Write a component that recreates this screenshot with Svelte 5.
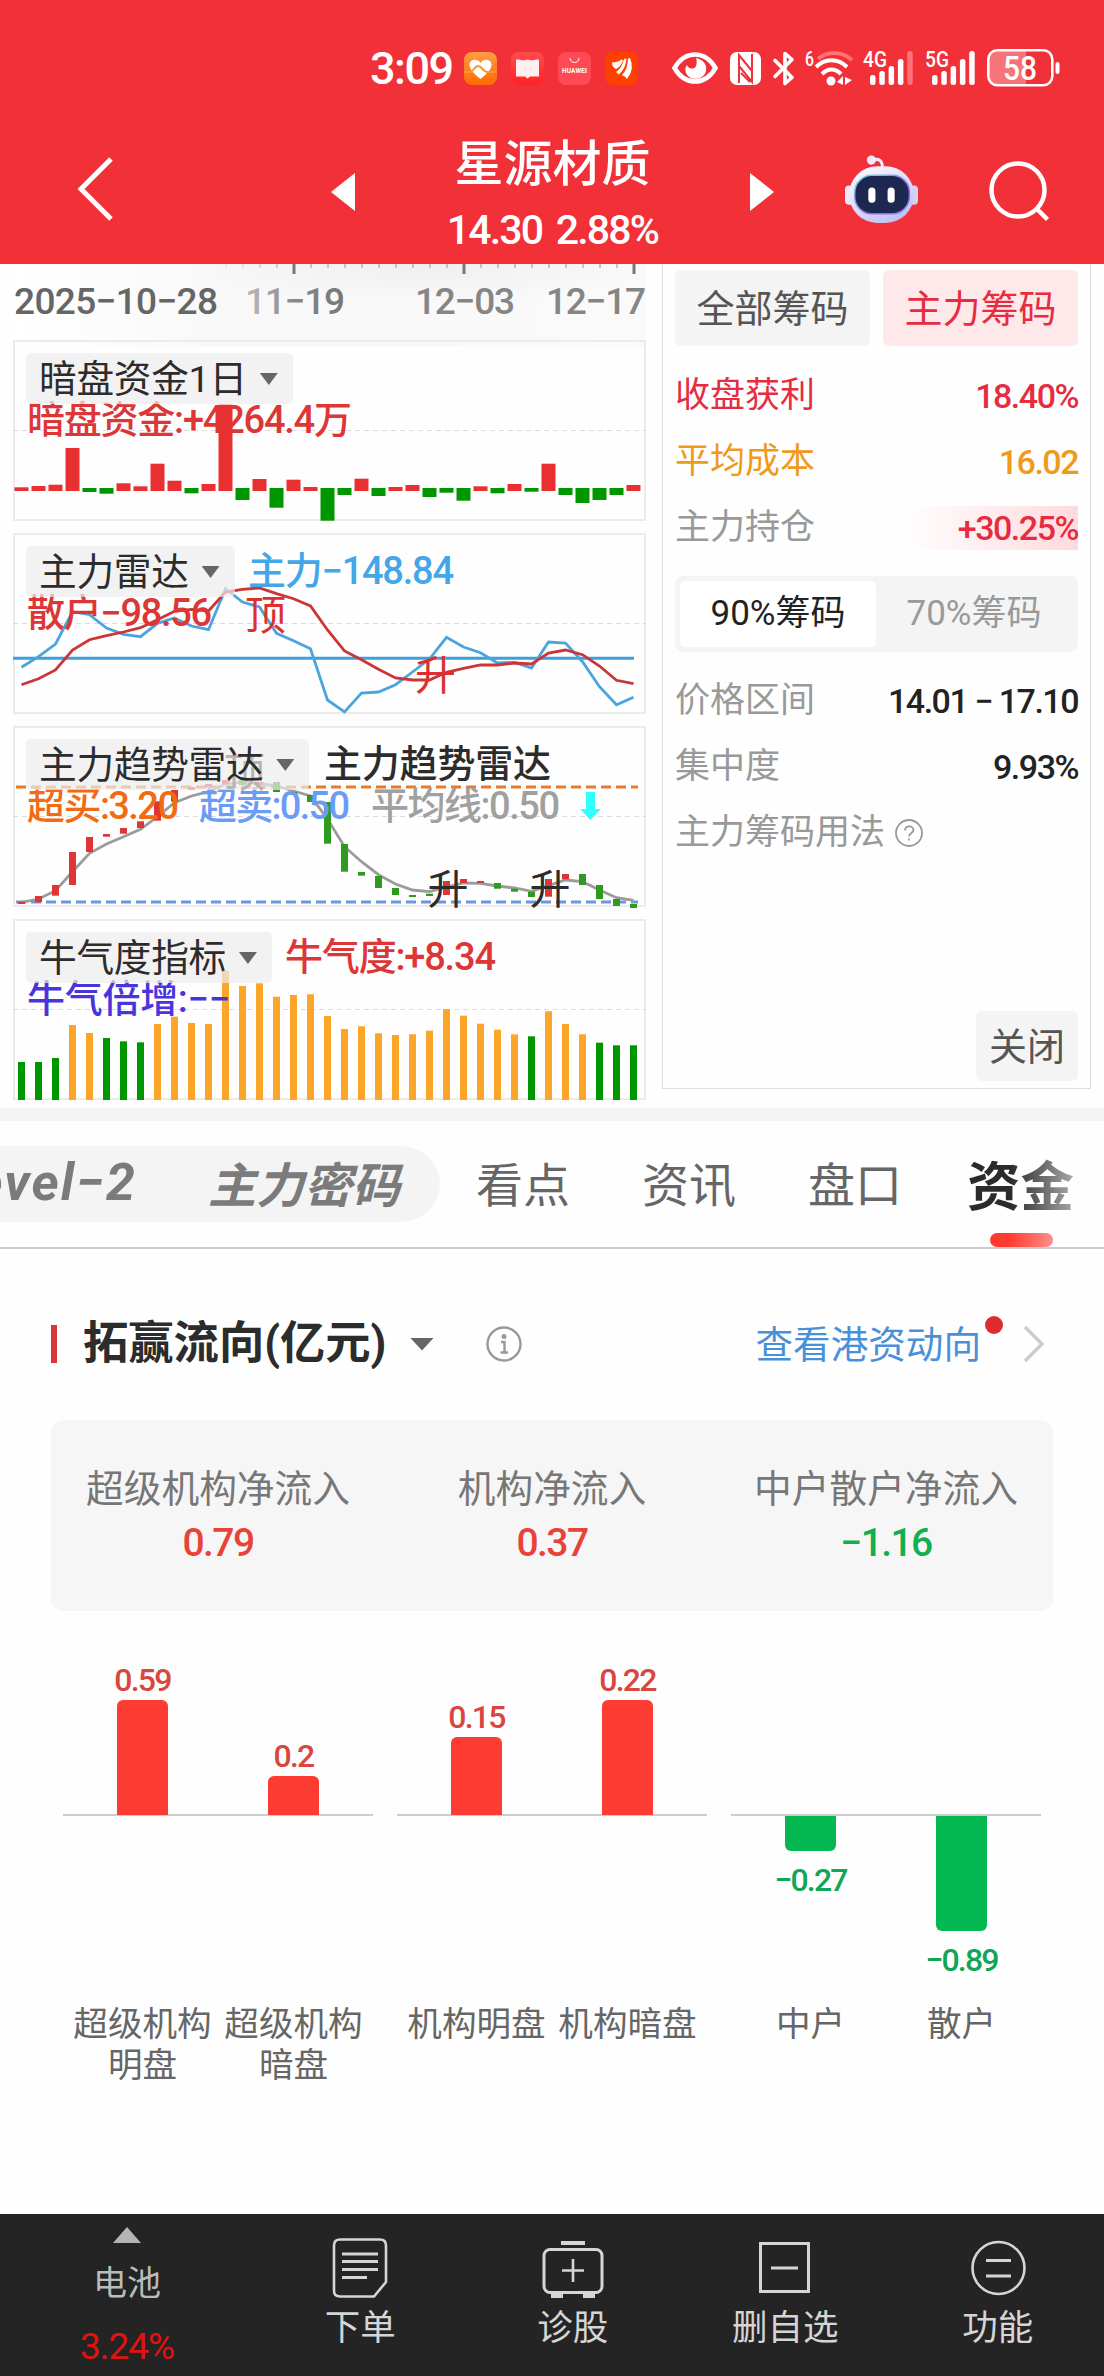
<script>
    const UP = "#e93030";
    const DOWN = "#009600";
    const STEP = 17;
    const FIRST = 8.5;

    const x = (i) => FIRST + i * STEP;
    const line = (values) => values.map((v, i) => `${x(i)},${v}`).join(" ");

    const axisTicks = Array.from({ length: 25 }, (_, i) => 213 + i * STEP);
    const axisDates = [
        { text: "2025-10-28", x: 1, width: 204, fill: "#666" },
        { text: "11-19", x: 232, width: 100, fill: "url(#dateFade)" },
        { text: "12-03", x: 402, width: 100, fill: "#858585" },
        { text: "12-17", x: 533, width: 100, fill: "#858585" },
    ];

    // signed height of every daily bar
    const darkFlow = [
        3.7, 5, 6.3, 43, -4, -5.7, 7.7, 4.7, 27.3, 10.3, -5.3, 7, 86.3, -12, 12, -19.7, 11.3, 4, -32.7,
        -7, 12.3, -8, 4, 6, -9, -4.7, -12.7, 4.7, -5.3, 7, -3.7, 27.3, -7, -15, -12, -7, 6,
    ];

    const mainForce = [
        134.3, 123.7, 111, 78.7, 81.7, 95, 101.3, 103.7, 90.3, 85, 93, 96.7, 55.7, 69, 74, 100.3, 107.7,
        115.7, 167, 179, 160, 159, 151.7, 139, 126, 104.3, 114, 119.7, 130, 129.3, 135, 109, 110, 128.7,
        153.7, 171.7, 164.3,
    ];
    const retail = [
        151.7, 145.7, 137, 117, 106.7, 102.7, 99, 94.7, 86.7, 78.3, 76.3, 78, 59, 56.3, 55, 60.7, 65.7,
        73, 97, 118, 126.7, 136.3, 145, 147, 147, 139.3, 135.3, 132, 132, 130, 131, 120, 117, 121.7, 133,
        147.3, 150.7,
    ];

    const trend = [
        176.3, 173, 164.7, 145.7, 127.3, 118, 110.7, 103.3, 90.7, 76.7, 70, 65.7, 58, 56, 57.5, 60, 65,
        70, 93, 120.7, 135.7, 148.7, 158, 164, 165.7, 161, 157, 157.3, 160, 162, 165.3, 159.7, 154,
        155.7, 164, 171.7, 174.3,
    ];
    // [top, bottom, rising]
    const candles = [
        [175.7, 178, 1], [170, 176.3, 1], [159, 169.7, 1], [126, 159, 1], [111, 126, 1], [108, 110.7, 1],
        [102, 107.7, 1], [95.3, 102, 1], [75.3, 94.7, 1], [64, 75.7, 1], [61, 64, 1], [58, 61, 1],
        [54, 58, 1], [54, 59, 0], [56, 59, 1], [56, 66, 0], [66, 69, 0], [69, 76, 0], [76, 117.7, 0],
        [118, 145.7, 0], [146, 149.7, 0], [150, 162, 0], [162, 169, 0], [169, 171, 0], [167.7, 170, 0],
        [155, 169, 1], [153, 157, 1], [155, 157, 1], [157, 162.7, 0], [162.7, 165.7, 0], [165.7, 171, 0],
        [153, 170.7, 1], [148, 153.3, 1], [148, 159, 0], [159, 173, 0], [173, 180, 0], [178, 182, 0],
    ];

    const bull = [
        143, 143, 139, 106, 114, 119, 122.3, 123.3, 105, 97.7, 104, 105, 51.7, 67, 64.3, 77.7, 76, 75.3,
        97, 110, 107.3, 114.3, 116, 115.3, 111.7, 90, 96.7, 104.7, 110.7, 115.3, 117.3, 92.3, 105, 115.3,
        123.7, 126.3, 126.3,
    ];
    const bullGreen = [0, 1, 2, 5, 6, 7, 30, 34, 35, 36];

    const summary = [
        { label: "超级机构净流入", value: "0.79" },
        { label: "机构净流入", value: "0.37" },
        { label: "中户散户净流入", value: "-1.16" },
    ];

    const groups = [
        [
            { label: "超级机构明盘", value: "0.59", height: 115 },
            { label: "超级机构暗盘", value: "0.2", height: 39 },
        ],
        [
            { label: "机构明盘", value: "0.15", height: 78 },
            { label: "机构暗盘", value: "0.22", height: 115 },
        ],
        [
            { label: "中户", value: "-0.27", height: 35 },
            { label: "散户", value: "-0.89", height: 115 },
        ],
    ];

    const isDown = (value) => value.startsWith("-");
    const dash = (value) => value.replaceAll("-", "−");
</script>

<div class="page">
    <header>
        <div class="status">
            <span class="clock">3:09</span>
            <svg class="app" viewBox="0 0 33 33">
                <defs>
                    <linearGradient id="health" x1="0" y1="0" x2="0" y2="1">
                        <stop offset="0" stop-color="#ff9d45" />
                        <stop offset="1" stop-color="#ff6a00" />
                    </linearGradient>
                </defs>
                <rect width="33" height="33" rx="8" fill="url(#health)" />
                <path d="M16.500 27C11 22 5.500 18 5.500 13c0-6 8-7 11-2 3-5 11-4 11 2 0 5-5.500 9-11 14z" fill="#fff" />
                <path d="M0 20h6c4 0 4-6 8-6s5 6 9 6h10" fill="none" stroke="#ff9331" stroke-width="2" />
            </svg>
            <svg class="app" viewBox="0 0 33 33">
                <defs>
                    <linearGradient id="book" x1="0" y1="0" x2="0" y2="1">
                        <stop offset="0" stop-color="#ff4c4f" />
                        <stop offset="1" stop-color="#ff2226" />
                    </linearGradient>
                </defs>
                <rect width="33" height="33" rx="8" fill="url(#book)" />
                <path d="M5 7.500h3c2 1 6 1 8.500 0 2.500 1 6.500 1 8.500 0h3v17h-9l-2.500 2-2.500-2H5z" fill="#fff0ee" />
            </svg>
            <svg class="app" viewBox="0 0 33 33">
                <rect width="33" height="33" rx="8" fill="#ff4a55" />
                <path d="M12 6c0 6 9 6 9 0" fill="none" stroke="#fff" stroke-width="1" />
                <text x="4" y="21" font-size="6.500" font-weight="700" fill="#fff" textLength="25">HUAWEI</text>
            </svg>
            <svg class="app" viewBox="0 0 33 33">
                <rect width="33" height="33" rx="8" fill="#ff4000" />
                <path d="M7 10.500q6 0 9.500-3l1.500 1q-2 6-7 8.500-4-2-4-6.500zM11 20q6-4 8-13l2.500-.5Q21 16 14 22.500zM17 23q6-6 6-16.500l2-.5q5 11-3 21-2-3-5-4z" fill="#fff" />
            </svg>

            <svg class="eye" viewBox="0 0 46 32">
                <path d="M2.500 16C13-2 33-2 43.500 16 33 34 13 34 2.500 16z" fill="none" stroke="#fff" stroke-width="4.500" />
                <path d="M24 6c9 2 11 8 10 13-2 9-16 11-20 2-1-3-1-6 1-8 1 4 7 5 9 1 1-3 1-5 0-8z" fill="#fff" />
            </svg>
            <svg class="nfc" viewBox="0 0 31 33">
                <rect width="31" height="33" rx="7" fill="#fff" />
                <path d="M9 31V3l13 16M22 2v28L9 14M11 21l9 9" fill="none" stroke="#f13038" stroke-width="2" />
            </svg>
            <svg class="bluetooth" viewBox="0 0 22 34">
                <path d="M2 9l17 17-7 6V2l7 6L2 25" fill="none" stroke="#fff" stroke-width="3.600" stroke-linecap="round" stroke-linejoin="round" />
            </svg>
            <svg class="wifi" viewBox="0 0 48 36">
                <text x="0" y="16" font-size="21" font-weight="500" fill="#fff" textLength="9" lengthAdjust="spacingAndGlyphs">6</text>
                <path d="M13 9c10-8 24-8 34 1" fill="none" stroke="#ff7276" stroke-width="4" />
                <path d="M11 17c9-9 22-9 31 0M17 24c6-6 13-6 19 0" fill="none" stroke="#fff" stroke-width="4" />
                <circle cx="26" cy="31" r="4.500" fill="#fff" />
                <path d="M32 32l6-6v9zM40 27l7 3-7 5z" fill="#fff" />
            </svg>
            {#each ["4G", "5G"] as net}
                <svg class="signal" viewBox="0 0 50 36">
                    <text x="0" y="17" font-size="22" font-weight="500" fill="#fff" textLength="24" lengthAdjust="spacingAndGlyphs">{net}</text>
                    {#each [10, 14, 19, 26, 34] as h, i}
                        <rect x={7 + i * 9.300} y={35 - h} width="5.500" height={h} rx="2.500" fill={net === "4G" && i === 4 ? "#ff7276" : "#fff"} />
                    {/each}
                </svg>
            {/each}
            <svg class="battery" viewBox="0 0 73 38">
                <path d="M10 2h29v34H10a8 8 0 0 1-8-8V10a8 8 0 0 1 8-8z" fill="#f7757a" />
                <rect x="1.300" y="1.300" width="64" height="35" rx="9" fill="none" stroke="#fff" stroke-width="2.600" />
                <rect x="68.500" y="13" width="4" height="12" rx="2" fill="#fff" />
                <text x="16" y="30.500" font-size="33" font-weight="500" fill="#fff" textLength="34" lengthAdjust="spacingAndGlyphs">58</text>
            </svg>
        </div>

        <div class="nav">
            <svg class="back" viewBox="0 0 36 64">
                <path d="M34 2L4 32l30 30" fill="none" stroke="#fff" stroke-width="5" />
            </svg>
            <svg class="prev" viewBox="0 0 24 38"><path d="M24 0v38L0 19z" fill="#fff" /></svg>
            <div class="stock">
                <h1>星源材质</h1>
                <p>14.30 2.88%</p>
            </div>
            <svg class="next" viewBox="0 0 24 38"><path d="M0 0v38l24-19z" fill="#fff" /></svg>
            <svg class="robot" viewBox="0 0 72 68">
                <defs>
                    <linearGradient id="shell" x1="0" y1="0" x2="0.600" y2="1">
                        <stop offset="0" stop-color="#fff" />
                        <stop offset="1" stop-color="#c3c3f2" />
                    </linearGradient>
                    <linearGradient id="rim" x1="0" y1="0" x2="1" y2="1">
                        <stop offset="0" stop-color="#7fe0ef" />
                        <stop offset="0.600" stop-color="#9a62e8" />
                        <stop offset="1" stop-color="#7c7cf0" />
                    </linearGradient>
                </defs>
                <path d="M27 5c6-2 10 0 10 8" fill="none" stroke="#f3e9fa" stroke-width="3" />
                <circle cx="26" cy="5" r="4.500" fill="#f3e9fa" />
                <rect x="0" y="30" width="10" height="19" rx="4" fill="#ece8fb" />
                <rect x="62" y="30" width="10" height="19" rx="4" fill="#d5d0f5" />
                <rect x="4" y="11" width="64" height="56" rx="28" fill="url(#shell)" />
                <rect x="9.500" y="20" width="54" height="38" rx="17" fill="#1d2850" stroke="url(#rim)" stroke-width="1.500" />
                <rect x="23" y="32" width="7" height="15" rx="3.500" fill="#fff" />
                <rect x="42" y="32" width="7" height="15" rx="3.500" fill="#fff" />
            </svg>
            <svg class="search" viewBox="0 0 62 62">
                <circle cx="29" cy="29" r="26.500" fill="none" stroke="#fff" stroke-width="4.500" />
                <path d="M47 47l11.500 11.500" stroke="#fff" stroke-width="4.500" />
            </svg>
        </div>
    </header>

    <section class="charts">
        <div class="indicators">
            <svg class="axis" viewBox="0 0 633 76">
                <defs>
                    <linearGradient id="axisFade">
                        <stop offset="0" stop-color="#fff" />
                        <stop offset="0.350" stop-color="#f8f8f8" />
                        <stop offset="1" stop-color="#fafafa" />
                    </linearGradient>
                    <radialGradient id="axisShade" cx="0.550" cy="0" r="0.500" fy="0" gradientTransform="scale(1 2)">
                        <stop offset="0" stop-color="#000" stop-opacity="0.040" />
                        <stop offset="1" stop-color="#000" stop-opacity="0" />
                    </radialGradient>
                    <linearGradient id="dateFade">
                        <stop offset="0" stop-color="#bbb" />
                        <stop offset="0.500" stop-color="#888" />
                        <stop offset="1" stop-color="#777" />
                    </linearGradient>
                </defs>
                <rect width="633" height="83" fill="url(#axisFade)" />
                <rect x="150" width="483" height="40" fill="url(#axisShade)" />
                {#each axisTicks as tick, i}
                    {#if i % 10 === 4}
                        <path d="M{tick} 0v10" stroke="#777" stroke-width="3" />
                    {:else}
                        <path d="M{tick} 0v4" stroke="#c4c4c4" stroke-width="2" opacity={Math.min(1, (i + 1) / 5)} />
                    {/if}
                {/each}
                {#each axisDates as date}
                    <text x={date.x} y="50" font-size="37" fill={date.fill} textLength={date.width}>{dash(date.text)}</text>
                {/each}
            </svg>

            <div class="panel">
                <svg viewBox="0 0 633 181">
                    <path class="grid" d="M0 90.500h633" />
                    <text x="14" y="93" fill="#dc3636" textLength="325">暗盘资金:+4264.4万</text>
                    {#each darkFlow as v, i}
                        <rect x={x(i) - 7} y={v > 0 ? 151 - v : 148} width="14" height={Math.abs(v)} fill={v > 0 ? UP : DOWN} />
                    {/each}
                </svg>
                <div class="chip">暗盘资金1日<i></i></div>
            </div>

            <div class="panel">
                <svg viewBox="0 0 633 181">
                    <path class="grid" d="M0 90.500h633" />
                    <path d="M0 125.300h621" stroke="#3f9fda" stroke-width="3" />
                    <polyline points={line(mainForce)} stroke="#4aa5df" />
                    <polyline points={line(retail)} stroke="#cb3535" />
                    <text x="235" y="51" fill="#43a6e8" textLength="206">主力−148.84</text>
                    <text x="14" y="93" fill="#dc3636" textLength="185">散户−98.56</text>
                    <text class="mark" x="252.500" y="97" fill="#dc3030">顶</text>
                    <text class="mark" x="422.500" y="157" fill="#dc3030">升</text>
                </svg>
                <div class="chip">主力雷达<i></i></div>
            </div>

            <div class="panel">
                <svg viewBox="0 0 633 181">
                    <path class="grid" d="M0 90.500h633" />
                    <path d="M3 61h622" stroke="#e87a2c" stroke-width="3" stroke-dasharray="10 5" />
                    <path d="M3 176h622" stroke="#6a96e2" stroke-width="3" stroke-dasharray="10 5" />
                    <polyline points={line(trend)} stroke="#9b9b9b" />
                    {#each candles as [top, bottom, rising], i}
                        <rect x={x(i) - 3.500} y={top} width="7" height={bottom - top} fill={rising ? "#e03535" : "#2f9a20"} />
                    {/each}
                    <text x="311" y="51" fill="#2c2c2c" textLength="227">主力趋势雷达</text>
                    <text x="14" y="93" fill="#f26a12" textLength="152">超买:3.20</text>
                    <text x="186" y="93" fill="#6b9bf5" textLength="151">超卖:0.50</text>
                    <text x="358" y="93" fill="#a0a0a0" textLength="189">平均线:0.50</text>
                    <path d="M573 66h9v17h6l-10.500 11L567 83h6z" fill="#33ffff" />
                    <text class="mark" x="231.500" y="61" fill="#333">顶</text>
                    <text class="mark" x="435" y="178" fill="#2c2c2c">升</text>
                    <text class="mark" x="537" y="178" fill="#2c2c2c">升</text>
                </svg>
                <div class="chip">主力趋势雷达<i></i></div>
            </div>

            <div class="panel">
                <svg viewBox="0 0 633 181">
                    <path class="grid" d="M0 90.500h633" />
                    <text x="272" y="51" fill="#dc3636" textLength="211">牛气度:+8.34</text>
                    {#each bull as top, i}
                        <rect x={x(i) - 3.500} y={top} width="7" height={181 - top} fill={bullGreen.includes(i) ? DOWN : "#fba629"} />
                    {/each}
                    <text x="14" y="93" fill="#4a35dc" textLength="203">牛气倍增:−−</text>
                </svg>
                <div class="chip">牛气度指标<i></i></div>
            </div>
        </div>

        <aside>
            <div class="switch">
                <button>全部筹码</button>
                <button class="active">主力筹码</button>
            </div>
            <div class="rows">
                <div class="red"><span>收盘获利</span><b>18.40%</b></div>
                <div class="orange"><span>平均成本</span><b>16.02</b></div>
                <div><span>主力持仓</span><b class="hold">+30.25%</b></div>
            </div>
            <div class="segment">
                <span class="on">90%筹码</span>
                <span>70%筹码</span>
            </div>
            <div class="rows">
                <div><span>价格区间</span><b>14.01 − 17.10</b></div>
                <div><span>集中度</span><b>9.93%</b></div>
                <div class="help">
                    <span>主力筹码用法</span>
                    <svg viewBox="0 0 28 28">
                        <circle cx="14" cy="14" r="13" fill="none" stroke="#999" stroke-width="1.800" />
                        <path d="M10 11.500c0-6 8.500-5 8.500-.5 0 3-4.500 3-4.500 6.500M14 19.500v2" fill="none" stroke="#999" stroke-width="1.800" />
                    </svg>
                </div>
            </div>
            <button class="close">关闭</button>
        </aside>
    </section>

    <nav class="tabs">
        <div class="pill"><span class="level">Level−2</span><span>主力密码</span></div>
        <a>看点</a>
        <a>资讯</a>
        <a>盘口</a>
        <a class="current">资金</a>
    </nav>

    <section class="flow">
        <div class="heading">
            <span class="bar"></span>
            <h2>拓赢流向(亿元)</h2>
            <i class="caret"></i>
            <svg class="info" viewBox="0 0 36 36">
                <circle cx="18" cy="18" r="16.500" fill="none" stroke="#999" stroke-width="2.400" />
                <circle cx="18" cy="10.500" r="2.500" fill="#999" />
                <path d="M15 16h3.500v10M14.500 26.500h7.500" fill="none" stroke="#999" stroke-width="2.400" />
            </svg>
            <a>查看港资动向<span class="dot"></span></a>
            <svg class="more" viewBox="0 0 22 38">
                <path d="M2 2l17 17L2 36" fill="none" stroke="#ccc" stroke-width="3.500" />
            </svg>
        </div>

        <div class="card">
            {#each summary as item}
                <div>
                    <span>{item.label}</span>
                    <b class:down={isDown(item.value)}>{dash(item.value)}</b>
                </div>
            {/each}
        </div>

        <div class="bars">
            {#each groups as group}
                <div class="group">
                    <div class="plot">
                        {#each group as item}
                            <div class="column" class:down={isDown(item.value)}>
                                <b>{dash(item.value)}</b>
                                <i style="height: {item.height}px"></i>
                            </div>
                        {/each}
                    </div>
                    <div class="labels">
                        {#each group as item}
                            <span>{item.label}</span>
                        {/each}
                    </div>
                </div>
            {/each}
        </div>
    </section>

    <footer>
        <div class="sector">
            <svg viewBox="0 0 28 16"><path d="M14 0l14 16H0z" fill="#b5b5b5" /></svg>
            <span>电池</span>
            <b>3.24%</b>
        </div>
        <div class="item">
            <svg viewBox="0 0 64 60">
                <path d="M12 1.500h40q6 0 6 6V44L46 58.500H12q-6 0-6-6v-45q0-6 6-6z" fill="none" stroke="#d5d5d5" stroke-width="2.600" />
                <path d="M14 16h36M14 23.500h36M14 31.500h36M14 39.500h25" stroke="#d5d5d5" stroke-width="3" />
            </svg>
            <span>下单</span>
        </div>
        <div class="item">
            <svg viewBox="0 0 64 60">
                <rect x="3" y="11.500" width="58" height="43" rx="6" fill="none" stroke="#d5d5d5" stroke-width="3" />
                <path d="M20 5h24M10 58h12M42 58h12" stroke="#d5d5d5" stroke-width="4" />
                <path d="M32 21v23M21 32.500h22" stroke="#d5d5d5" stroke-width="2.600" />
            </svg>
            <span>诊股</span>
        </div>
        <div class="item">
            <svg viewBox="0 0 64 60">
                <rect x="7.500" y="5.500" width="48" height="48" fill="none" stroke="#d5d5d5" stroke-width="3" />
                <path d="M18 30h27" stroke="#d5d5d5" stroke-width="3" />
            </svg>
            <span>删自选</span>
        </div>
        <div class="item">
            <svg viewBox="0 0 64 60">
                <circle cx="32.500" cy="30" r="26" fill="none" stroke="#d5d5d5" stroke-width="2.600" />
                <path d="M20 22.500h25M20 38h25" stroke="#d5d5d5" stroke-width="3" />
            </svg>
            <span>功能</span>
        </div>
    </footer>
</div>

<style>
    :global(body) {
        background: #fff;
    }

    * {
        box-sizing: border-box;
    }

    .page {
        display: flex;
        flex-direction: column;
        width: 1104px;
        height: 2376px;
        overflow: hidden;
        color: #2c2c2c;
        font-family: "Roboto", "Noto Sans CJK SC", sans-serif;
        background: #fefefe;
    }

    svg {
        display: block;
        flex: none;
        overflow: visible;
    }

    h1, h2, p {
        margin: 0;
    }

    button {
        padding: 0 0 5px;
        border: 0;
        font-family: inherit;
    }

    /* Header */
    header {
        flex: none;
        height: 264px;
        color: #fff;
        background: #f13038;
    }

    .status {
        display: flex;
        align-items: center;
        height: 136px;
        padding-left: 370px;
    }

    .clock {
        width: 94px;
        font-weight: 500;
        font-size: 45px;
        letter-spacing: -1.5px;
        white-space: nowrap;
    }

    .app {
        width: 33px;
        height: 33px;
        margin-right: 14px;
    }

    .eye {
        width: 46px;
        height: 32px;
        margin: 0 12px 0 20px;
    }

    .nfc {
        width: 31px;
        height: 33px;
        margin-right: 12px;
    }

    .bluetooth {
        width: 22px;
        height: 35px;
        margin-right: 10px;
    }

    .wifi {
        width: 48px;
        height: 36px;
        margin-right: 10px;
    }

    .signal {
        width: 50px;
        height: 36px;
        margin-right: 12px;
    }

    .battery {
        width: 73px;
        height: 38px;
    }

    .nav {
        display: flex;
        align-items: center;
        height: 106px;
        padding-left: 77px;
    }

    .back {
        width: 36px;
        height: 64px;
        margin-right: 218px;
    }

    .prev,
    .next {
        width: 24px;
        height: 38px;
        margin-top: 5px;
    }

    .stock {
        width: 395px;
        text-align: center;
    }

    h1 {
        margin-top: 20px;
        font-weight: 500;
        font-size: 49px;
        line-height: 62px;
    }

    .stock p {
        font-weight: 500;
        font-size: 41px;
        line-height: 68px;
        letter-spacing: -1.8px;
        word-spacing: 5px;
    }

    .robot {
        width: 73px;
        height: 69px;
        margin-left: 71px;
    }

    .search {
        width: 62px;
        height: 62px;
        margin: 6px 0 0 71px;
    }

    /* Indicator charts */
    .charts {
        display: flex;
        flex: none;
        height: 857px;
        border-bottom: 13px solid #f4f4f4;
    }

    .indicators {
        display: flex;
        flex-direction: column;
        gap: 12px;
        width: 633px;
        margin-left: 13px;
    }

    .axis {
        width: 633px;
        height: 76px;
        margin-bottom: -12px;
        font-weight: 500;
    }

    .panel {
        position: relative;
        height: 181px;
        border: 2px solid #ebebeb;
    }

    .panel svg {
        width: 633px;
        height: 181px;
        margin: -2px;
    }

    .panel text {
        font-weight: 500;
        font-size: 38px;
    }

    .panel .mark {
        font-weight: 400;
        font-size: 41px;
        text-anchor: middle;
    }

    .panel polyline {
        fill: none;
        stroke-width: 2.8;
    }

    .grid {
        stroke: #dcdcdc;
        stroke-width: 1;
        stroke-dasharray: 5 4;
    }

    .chip {
        position: absolute;
        top: 11px;
        left: 11px;
        display: flex;
        gap: 13px;
        align-items: center;
        height: 51px;
        padding: 1px 15px 0 13px;
        font-size: 37.7px;
        line-height: 50px;
        letter-spacing: -0.3px;
        white-space: nowrap;
        background: rgba(236, 236, 236, 0.7);
        border-radius: 5px;
    }

    .chip i,
    .caret {
        width: 18px;
        height: 12px;
        background: #666;
        clip-path: polygon(0 0, 100% 0, 50% 100%);
    }

    /* Chip distribution */
    aside {
        display: flex;
        flex-direction: column;
        width: 429px;
        height: 825px;
        margin-left: 16px;
        padding: 6px 12px 7px;
        border: 1px solid #ddd;
        border-top: 0;
    }

    .switch {
        display: flex;
        gap: 13px;
        margin-bottom: 17px;
    }

    .switch button {
        width: 195px;
        height: 76px;
        color: #555;
        font-size: 38px;
        background: #f4f4f4;
        border-radius: 6px;
    }

    .switch .active {
        color: #e62c40;
        background: #ffe8ea;
    }

    .rows div {
        display: flex;
        align-items: center;
        justify-content: space-between;
        height: 66px;
        color: #999;
        font-size: 35px;
        line-height: 44px;
    }

    .rows b {
        color: #222;
        font-weight: 500;
        font-size: 34px;
        letter-spacing: -1.5px;
    }

    .rows .red,
    .rows .red b,
    .rows b.hold {
        color: #e62c40;
    }

    .rows .orange,
    .rows .orange b {
        color: #f09a1a;
    }

    .rows .hold {
        width: 172px;
        text-align: right;
        background: linear-gradient(90deg, rgba(255, 218, 222, 0), #ffdade);
    }

    .segment {
        display: flex;
        height: 76px;
        margin: 15px 0 16px;
        padding: 5px;
        color: #999;
        font-size: 35px;
        line-height: 66px;
        text-align: center;
        background: #f4f4f4;
        border-radius: 8px;
    }

    .segment span {
        width: 196px;
    }

    .segment .on {
        color: #222;
        background: #fff;
        border-radius: 5px;
    }

    .rows .help {
        gap: 10px;
        justify-content: flex-start;
    }

    .help svg {
        width: 28px;
        height: 28px;
    }

    .close {
        align-self: flex-end;
        width: 102px;
        height: 70px;
        margin-top: auto;
        color: #555;
        font-size: 38px;
        background: #f4f4f4;
        border-radius: 6px;
    }

    /* Tabs */
    .tabs {
        position: relative;
        display: flex;
        flex: none;
        align-items: center;
        height: 128px;
        border-bottom: 2px solid #ccc;
    }

    .pill {
        display: flex;
        flex: none;
        gap: 71px;
        align-items: center;
        justify-content: flex-end;
        width: 440px;
        height: 76px;
        padding: 0 40px 4px 0;
        color: #7b7b7b;
        font-weight: 700;
        font-size: 48px;
        font-style: italic;
        white-space: nowrap;
        background: #f4f4f4;
        border-radius: 0 38px 38px 0;
    }

    .level {
        font-size: 52px;
        letter-spacing: 2px;
    }

    .tabs a {
        width: 94px;
        margin-left: 72px;
        padding-bottom: 5px;
        color: #666;
        font-size: 47px;
        white-space: nowrap;
    }

    .pill + a {
        margin-left: 36px;
    }

    .tabs .current {
        width: 108px;
        margin-left: 65px;
        padding-bottom: 3px;
        color: transparent;
        font-weight: 700;
        font-size: 53.5px;
        background: linear-gradient(90deg, #2b2b2b 40%, #aaa);
        background-clip: text;
    }

    .current::after {
        position: absolute;
        bottom: 0;
        left: 990px;
        width: 63px;
        height: 14px;
        background: linear-gradient(90deg, #ff3a31 30%, #ff8f8a);
        border-radius: 7px;
        content: "";
    }

    /* Capital flow */
    .flow {
        flex: 1;
        padding: 70px 51px 0;
    }

    .heading {
        display: flex;
        align-items: center;
        height: 50px;
    }

    .bar {
        width: 6px;
        height: 38px;
        background: #d93838;
    }

    h2 {
        width: 303px;
        margin-left: 26px;
        font-weight: 700;
        font-size: 45.3px;
        line-height: 50px;
        white-space: nowrap;
    }

    .caret {
        width: 24px;
        height: 13px;
        margin: 0 52px 0 24px;
    }

    .info {
        width: 36px;
        height: 36px;
    }

    .heading a {
        position: relative;
        margin-left: auto;
        padding-bottom: 5px;
        color: #4a90d9;
        font-size: 37.6px;
    }

    .dot {
        position: absolute;
        top: 2px;
        right: -22px;
        width: 18px;
        height: 18px;
        background: #dd2c2c;
        border-radius: 50%;
    }

    .more {
        width: 22px;
        height: 38px;
        margin: 0 8px 0 42px;
    }

    .card {
        display: grid;
        grid-template-columns: repeat(3, 1fr);
        height: 191px;
        margin-top: 51px;
        padding-top: 42px;
        text-align: center;
        background: #f6f6f6;
        border-radius: 13px;
    }

    .card div {
        display: flex;
        flex-direction: column;
    }

    .card span {
        color: #777;
        font-size: 37.7px;
        line-height: 54px;
    }

    .card b {
        color: #e84338;
        font-weight: 500;
        font-size: 39px;
        line-height: 54px;
        letter-spacing: -1.6px;
    }

    .card b.down {
        color: #10b050;
    }

    .bars {
        display: flex;
        gap: 24px;
        margin-top: 39px;
        padding: 0 12px;
    }

    .group {
        width: 310px;
    }

    /* gains stand on the centre line, losses hang from it */
    .plot {
        display: flex;
        height: 331px;
        padding: 0 4px;
        background: linear-gradient(#ccc, #ccc) 0 164px / 100% 2px no-repeat;
    }

    .column {
        display: flex;
        flex-direction: column;
        gap: 3px;
        align-items: center;
        justify-content: flex-end;
        width: 151px;
        height: 165px;
    }

    .column i {
        width: 51px;
        background: #fc3c32;
        border-radius: 6px 6px 0 0;
    }

    .column b {
        color: #d8473f;
        font-weight: 500;
        font-size: 32px;
        line-height: 34px;
        letter-spacing: -1.8px;
    }

    .column.down {
        flex-direction: column-reverse;
        gap: 12px;
        margin-top: 166px;
    }

    .column.down i {
        background: #03b850;
        border-radius: 0 0 6px 6px;
    }

    .column.down b {
        color: #10a558;
    }

    .labels {
        display: flex;
        margin-top: 23px;
        padding: 0 4px;
    }

    .labels span {
        width: 151px;
        padding: 0 5px;
        color: #666;
        font-size: 34.6px;
        line-height: 41px;
        text-align: center;
    }

    /* Bottom bar */
    footer {
        display: flex;
        flex: none;
        height: 162px;
        color: #d5d5d5;
        background: #242424;
    }

    .sector {
        display: flex;
        flex-direction: column;
        align-items: center;
        width: 254px;
        padding-top: 13px;
        color: #bbb;
        font-size: 34px;
    }

    .sector svg {
        width: 28px;
        height: 16px;
    }

    .sector span {
        margin-top: 15px;
        line-height: 50px;
    }

    .sector b {
        margin-top: 14px;
        color: #e01212;
        font-weight: 400;
        font-size: 37px;
        line-height: 50px;
        letter-spacing: -1px;
    }

    .item {
        display: flex;
        flex-direction: column;
        align-items: center;
        width: 212.5px;
        padding-top: 24px;
        font-size: 35.5px;
        line-height: 50px;
    }

    .item svg {
        width: 64px;
        height: 60px;
        margin-bottom: 5px;
    }
</style>
